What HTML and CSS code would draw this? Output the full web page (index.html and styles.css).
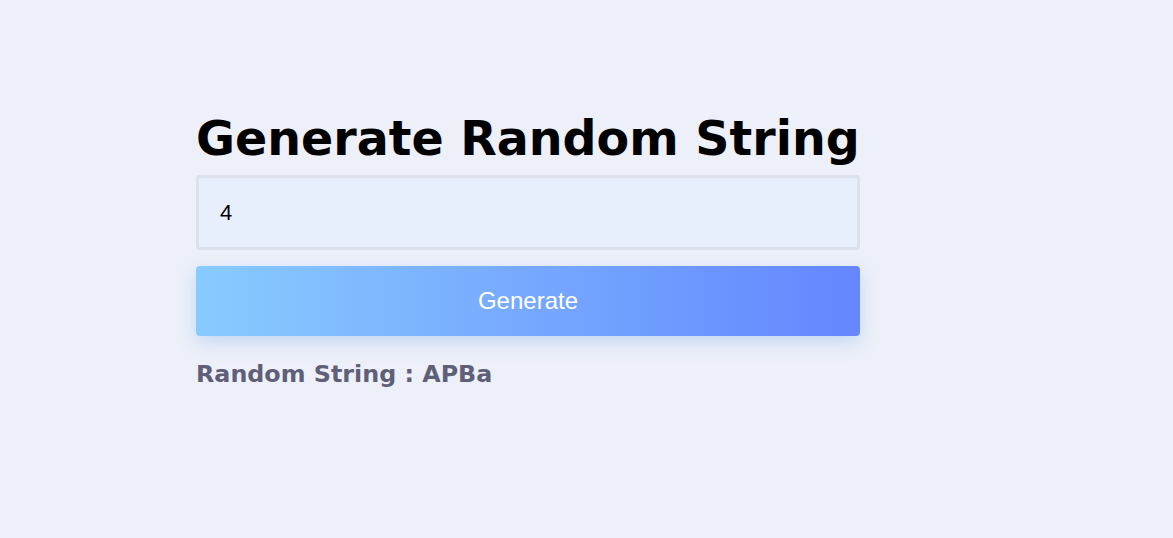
FILE: index.html
```html
<!DOCTYPE html>
<html>
<head>
<meta charset="utf-8">
<link rel="stylesheet" href="styles.css">
</head>
<body>
<div class="page">
  <div class="card">
    <h1 class="title">Generate Random String</h1>
    <input class="length" type="text" value="4">
    <button class="generate">Generate</button>
    <p class="result">Random String : APBa</p>
  </div>
</div>
</body>
</html>
```
FILE: styles.css
```css
html, body {
  margin: 0;
  padding: 0;
  background: #edf0f8;
}
.page {
  padding: 109px 0 0 196px;
}
.card {
  width: 664px;
  display: flex;
  flex-direction: column;
}
.title {
  margin: 0;
  font-family: "DejaVu Sans", sans-serif;
  font-weight: bold;
  font-size: 47.5px;
  line-height: 60px;
  color: #000;
  white-space: nowrap;
}
.length {
  margin-top: 6px;
  box-sizing: border-box;
  height: 75px;
  border: 3px solid #dce1ec;
  border-radius: 3px;
  background: #e8effc;
  padding: 0 21px;
  font-family: "Liberation Sans", Arial, sans-serif;
  font-size: 22px;
  color: #000;
  outline: none;
}
.generate {
  margin-top: 16px;
  height: 70px;
  border: none;
  border-radius: 4px;
  background: linear-gradient(90deg, #88cbff 0%, #6486ff 100%);
  box-shadow: 0 6px 18px rgba(120, 170, 240, 0.35);
  color: #fff;
  font-family: "Liberation Sans", Arial, sans-serif;
  font-size: 24px;
}
.result {
  margin: 24px 0 0;
  font-family: "DejaVu Sans", sans-serif;
  font-weight: bold;
  font-size: 23.8px;
  color: #5f5f78;
}
```
